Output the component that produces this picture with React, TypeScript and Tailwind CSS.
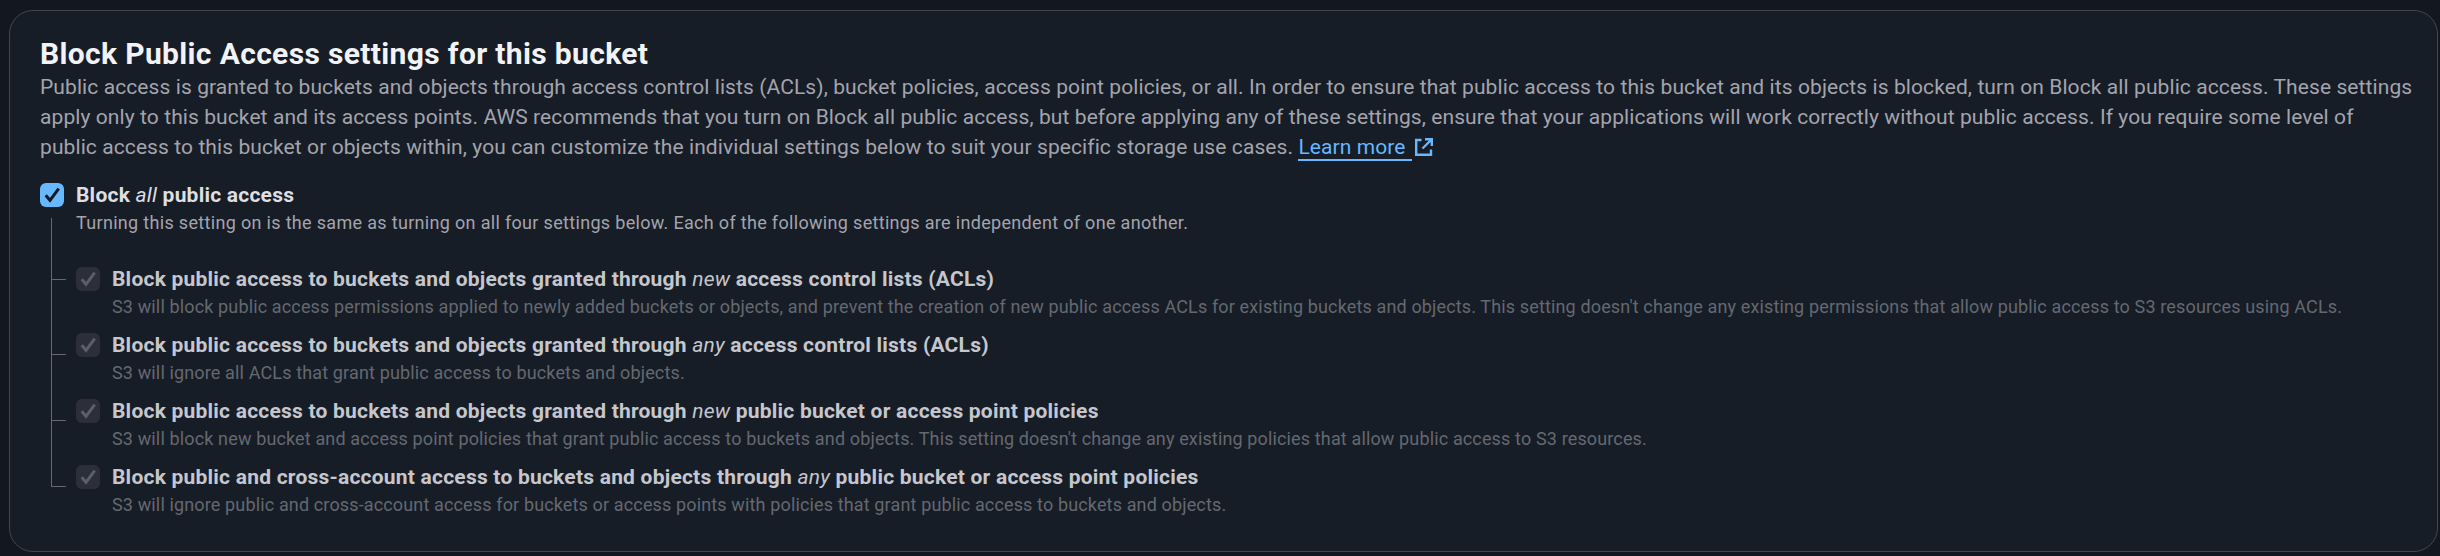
const options = [
  {
    before: "Block public access to buckets and objects granted through ",
    em: "new",
    after: " access control lists (ACLs)",
    desc: "S3 will block public access permissions applied to newly added buckets or objects, and prevent the creation of new public access ACLs for existing buckets and objects. This setting doesn't change any existing permissions that allow public access to S3 resources using ACLs.",
  },
  {
    before: "Block public access to buckets and objects granted through ",
    em: "any",
    after: " access control lists (ACLs)",
    desc: "S3 will ignore all ACLs that grant public access to buckets and objects.",
  },
  {
    before: "Block public access to buckets and objects granted through ",
    em: "new",
    after: " public bucket or access point policies",
    desc: "S3 will block new bucket and access point policies that grant public access to buckets and objects. This setting doesn't change any existing policies that allow public access to S3 resources.",
  },
  {
    before: "Block public and cross-account access to buckets and objects through ",
    em: "any",
    after: " public bucket or access point policies",
    desc: "S3 will ignore public and cross-account access for buckets or access points with policies that grant public access to buckets and objects.",
  },
];

function Check() {
  return (
    <svg viewBox="0 0 24 24" fill="none" className="size-[24px]">
      <path d="M5.7 12.3L10 17.3L18.7 5.7" stroke="currentColor" strokeWidth="3" />
    </svg>
  );
}

function ExternalIcon() {
  return (
    <svg viewBox="0 0 18 18" fill="none" className="ml-[3px] inline-block size-[18px] align-[-2px] text-[#66b8ff]">
      <path d="M6.5 2H1.2V16.8H16V11.5" stroke="currentColor" strokeWidth="2.4" />
      <path d="M7.5 10.5L16.5 1.5M10 1.2H16.8V8" stroke="currentColor" strokeWidth="2.4" />
    </svg>
  );
}

export default function App() {
  return (
    <div className="h-[556px] bg-[#131720] pl-[9px] pr-[2px] pt-[10px] pb-[4px] font-['Roboto',sans-serif]">
      <div className="h-full rounded-[24px] border border-[#424650] bg-[#161d26] pl-[30px] pr-[20px] pt-[25px]">
        <h2 className="text-[30px] leading-[36px] font-bold tracking-[0.35px] text-[#f3f3f7] whitespace-nowrap">
          Block Public Access settings for this bucket
        </h2>
        <p className="text-[21px] leading-[30px] tracking-[0.09px] text-[#a4a4ad] whitespace-nowrap">
          Public access is granted to buckets and objects through access control lists (ACLs), bucket policies, access point policies, or all. In order to ensure that public access to this bucket and its objects is blocked, turn on Block all public access. These settings
          <br />
          apply only to this bucket and its access points. AWS recommends that you turn on Block all public access, but before applying any of these settings, ensure that your applications will work correctly without public access. If you require some level of
          <br />
          public access to this bucket or objects within, you can customize the individual settings below to suit your specific storage use cases.{" "}
          <a className="text-[#66b8ff] border-b-[2px] border-[#66b8ff] pr-[6px]">Learn more</a>
          <ExternalIcon />
        </p>

        <div className="mt-[21px] flex gap-[12px]">
          <span className="flex size-[24px] shrink-0 items-center justify-center rounded-[6px] bg-[#66b8ff] text-[#131720]">
            <Check />
          </span>
          <div className="text-[21px] leading-[24px] font-bold tracking-[0.22px] text-[#dedee3]">
            Block <em className="font-normal">all</em> public access
          </div>
        </div>
        <p className="ml-[36px] mt-[4px] text-[18px] leading-[24px] tracking-[0.32px] text-[#a4a4ad] whitespace-nowrap">
          Turning this setting on is the same as turning on all four settings below. Each of the following settings are independent of one another.
        </p>

        <div className="mt-[-17px] flex">
          <div className="ml-[11px] mr-[10px] w-[15px] shrink-0 flex flex-col">
            <div className="h-[62px] border-l-[1.5px] border-b-[1.5px] border-[#656871]" />
            <div className="h-[75px] border-l-[1.5px] border-b-[1.5px] border-[#656871]" />
            <div className="h-[66px] border-l-[1.5px] border-b-[1.5px] border-[#656871]" />
            <div className="h-[66px] border-l-[1.5px] border-b-[1.5px] border-[#656871]" />
          </div>
          <div className="pt-[49px] flex flex-col">
            {options.map((o, i) => (
              <div key={i} className="h-[66px] flex gap-[12px]">
                <span className="flex size-[24px] shrink-0 items-center justify-center rounded-[6px] bg-[#2c2f3a] text-[#5c5f6b]">
                  <Check />
                </span>
                <div className="whitespace-nowrap">
                  <div className="text-[21px] leading-[24px] font-bold tracking-[0.22px] text-[#c6c6cd]">
                    {o.before}
                    <em className="font-normal">{o.em}</em>
                    {o.after}
                  </div>
                  <div className="mt-[4px] text-[18px] leading-[24px] tracking-[0.14px] text-[#656871]">{o.desc}</div>
                </div>
              </div>
            ))}
          </div>
        </div>
      </div>
    </div>
  );
}
